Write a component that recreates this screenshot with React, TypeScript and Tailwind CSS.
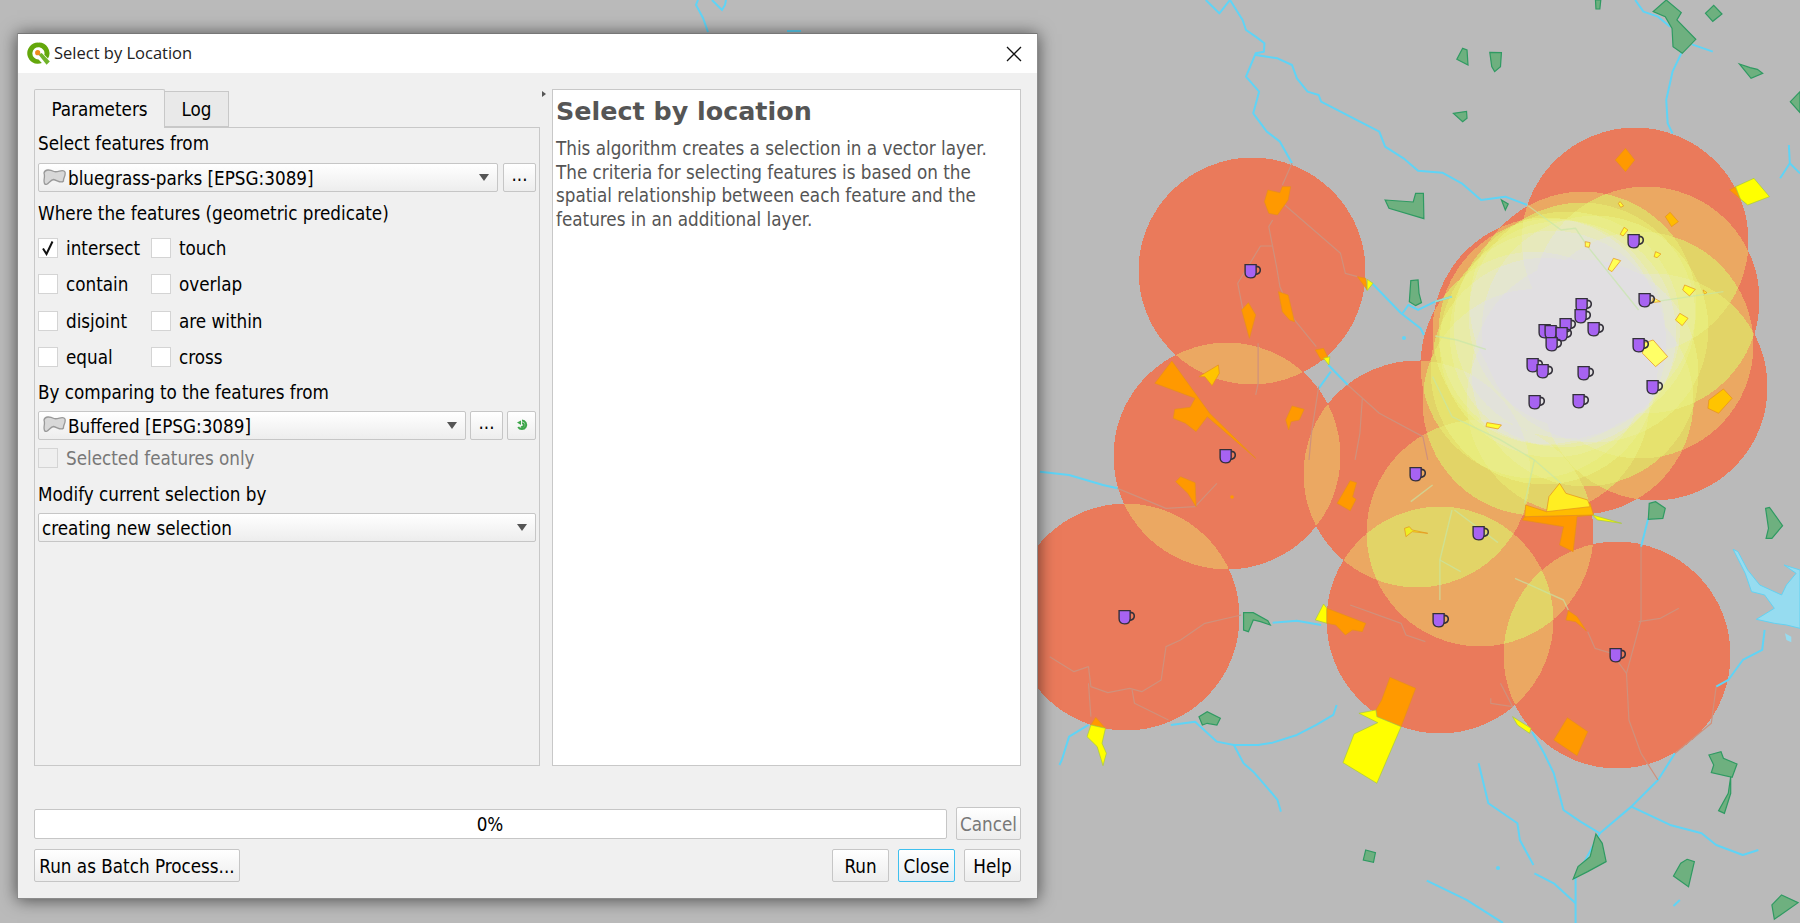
import React from "react";

const BODY = "font-['DejaVu_Sans_Condensed','DejaVu_Sans',sans-serif]";

// cafe points, every one carries a buffer ring
const cups: [number, number][] = [
  [1635, 241], [1646, 300], [1583, 305], [1582, 316], [1567, 325], [1595, 329],
  [1546, 331], [1552, 332], [1563, 334], [1553, 344], [1640, 345], [1534, 365],
  [1544, 371], [1585, 373], [1654, 387], [1536, 402], [1580, 401], [1252, 271],
  [1227, 456], [1417, 474], [1480, 533], [1440, 620], [1617, 655], [1126, 617],
];

const levelColors = [
  "#ea7b5b", "#eca863", "#e3d567", "#e6e36f", "#e8ec7c", "#e9ed88", "#e9ee96",
  "#e8eba8", "#e7e9bc", "#e5e6cf", "#e3e3da", "#e2e0e2",
];

const RING_ALPHA = 0.15;

function buildTables() {
  const hex = (c: string, i: number) => parseInt(c.slice(1 + i * 2, 3 + i * 2), 16) / 255;
  const alphaAt = (k: number) => 1 - Math.pow(1 - RING_ALPHA, k);
  const r: number[] = [], g: number[] = [], b: number[] = [], a: number[] = [];
  for (let i = 0; i < 256; i++) {
    const v = (i + 0.5) / 256;
    let level = 0;
    for (let k = 1; k <= levelColors.length; k++) {
      if (v > (alphaAt(k) + alphaAt(k - 1)) / 2) level = k;
    }
    const c = levelColors[Math.max(level - 1, 0)];
    r.push(hex(c, 0)); g.push(hex(c, 1)); b.push(hex(c, 2));
    a.push(level === 0 ? 0 : 1);
  }
  const s = (t: number[]) => t.map((n) => n.toFixed(3)).join(" ");
  return { r: s(r), g: s(g), b: s(b), a: s(a) };
}

const GREEN = { fill: "#6eb07f", stroke: "#2f9a62" };

// points below are in the 2.06x / 3x crop space of the two map groups
const topParks = [
  "1292,0 1265,35 1290,50 1304,85 1306,140 1325,160 1353,118 1314,60 1323,38",
  "1390,16 1407,42 1388,64 1373,40",
  "1146,0 1157,0 1155,27 1147,27",
  "872,145 881,150 883,195 860,178",
  "928,157 952,158 950,200 938,215 932,200",
  "1443,192 1465,203 1480,208 1491,220 1467,235",
  "1568,275 1548,305 1568,338",
  "853,340 880,334 881,355 872,365",
  "712,600 770,606 775,580 791,580 792,656 720,625",
  "952,600 966,612 960,630",
  "765,842 780,840 782,880 787,908 775,917 762,905",
];

const bottomParks = [
  "1257,130 1270,125 1290,145 1285,175 1255,178",
  "1497,145 1505,142 1532,197 1510,235 1498,235 1503,205",
  "420,458 440,458 470,482 475,495 455,485 440,480 430,515 420,510",
  "328,770 345,755 372,775 365,795 345,790 335,795",
  "1380,885 1405,875 1410,895 1438,912 1428,952 1385,938 1390,915",
  "1425,950 1425,1000 1412,1060 1400,1052 1420,1000",
  "1147,1122 1160,1150 1168,1205 1130,1235 1100,1257 1110,1220 1135,1190",
  "672,1170 692,1178 688,1207 667,1200",
  "1335,1198 1350,1205 1338,1280 1307,1248 1322,1210",
  "1530,1305 1564,1328 1515,1378 1510,1335",
];

const topRivers = [
  "342,0 370,40 392,0 418,60 425,90 445,110 463,130 462,155 445,160 425,230 452,275 440,340 468,395 495,425 520,490",
  "445,165 490,175 520,195 530,235 552,275 575,285 580,305 700,395 712,440 750,475 780,512 830,518 870,550 910,600 960,590 1005,615",
  "1228,0 1245,35 1275,50 1300,80",
  "1345,133 1388,155",
  "1323,160 1305,215 1292,300 1295,370 1305,400",
  "1545,435 1547,490 1527,535",
  "1547,490 1568,520",
  "685,850 745,940 785,985 792,1005",
  "748,940 760,915 780,930 815,905 850,890",
  "595,1095 635,1155",
  "575,1165 600,1115",
];

const bottomRivers = [
  "0,35 60,45 130,75 160,85",
  "480,488 530,482 580,495",
  "100,795 60,830 45,900 40,915",
  "270,795 320,785 365,845 400,855 450,855 480,848 530,825 570,795 605,765 612,735",
  "400,855 420,910 440,935 470,985 490,1020 497,1055",
  "905,910 925,1030 985,1090 990,1140 1018,1215",
  "1015,815 1040,880 1060,940 1080,1050 1115,1085 1155,1120 1220,1040 1275,960 1310,880",
  "1220,1040 1300,1095 1365,1120 1395,1155 1450,1185 1482,1170",
  "1255,175 1240,260",
  "1495,510 1490,570 1450,600 1420,660 1395,680",
  "1155,1120 1105,1255 1105,1389",
  "1020,1240 1060,1270 1105,1330",
  "798,1262 880,1320 955,1389",
  "1320,1320 1307,1338",
];

const topFaint = [
  "520,490 500,555",
  "505,615 620,760 630,820 655,830",
  "480,660 472,680 488,800 495,860 525,960 570,1040",
  "480,738 455,738 408,850 420,940",
  "450,1030 450,1150 445,1185",
  "575,1160 560,1300 555,1380",
  "665,1195 660,1300 650,1380",
  "635,1155 700,1240 790,1310 800,1380",
];

const bottomFaint = [
  "160,85 260,145 320,140 365,70",
  "20,590 70,635 100,620 105,680 140,698 185,685 210,695 250,660 260,560 290,540 340,490 415,465",
  "100,670 105,770",
  "190,690 195,730 265,780",
  "640,435 745,490 755,525 795,545",
  "1240,260 1240,480 1210,640 1215,780 1240,880 1275,960",
  "1235,485 1280,475 1318,445",
  "1130,515 1145,565 1180,580 1210,640",
  "950,670 975,740 930,730 930,715",
  "1395,680 1385,790 1310,880",
];

const topPale = [
  "1005,615 1075,690 1105,685 1130,740 1235,930",
  "1270,905 1410,875",
  "815,1008 860,1020 920,1048",
  "810,1130 850,1250 950,1320 1020,1380",
  "850,890 815,905",
];

const bottomPale = [
  "980,355 1080,420 1090,450",
  "1020,0 1000,130",
  "850,150 825,300 825,420",
  "855,150 945,248",
  "825,300 868,335",
  "810,75 765,125",
  "1020,0 1075,70",
];

const topFeatures: [string, string][] = [
  ["500,560 517,560 512,600 490,645 472,640 463,605 470,570 495,578", "#ff9900"],
  ["430,908 445,945 432,1015 416,930", "#ff9900"],
  ["492,875 512,885 525,965 515,960 500,935", "#ff9900"],
  ["568,1050 585,1045 595,1075 580,1080", "#ff9900"],
  ["655,830 672,835 675,870", "#ff9900"],
  ["675,838 687,850 675,872", "#ffff00"],
  ["585,1075 598,1070 596,1095", "#ffff00"],
  ["1208,445 1227,480 1208,515 1187,480", "#ff9900"],
  ["1290,650 1300,637 1317,665 1303,680", "#ffbb00"],
  ["1423,570 1435,560 1445,597", "#ff9900"],
  ["1435,560 1473,535 1505,590 1460,615 1445,597", "#ffff00"],
  ["237,1150 272,1083 350,1240 445,1375 345,1250 322,1295 300,1270 275,1255 278,1228 310,1222 320,1195", "#ff9900"],
  ["328,1130 368,1095 370,1120 355,1157 340,1130", "#ffc400"],
  ["520,1218 545,1228 535,1260 518,1265 513,1290 507,1260", "#ff9900"],
  ["1380,1200 1410,1167 1428,1195 1400,1240 1378,1225", "#ffc400"],
  ["1197,605 1204,618 1198,622 1193,610", "#ffff33"],
  ["1205,682 1213,690 1203,708 1197,703", "#ffff33"],
  ["1270,755 1281,762 1273,773 1267,770", "#ffff33"],
  ["1183,775 1198,782 1180,815 1172,808", "#ffff55"],
  ["1330,855 1352,868 1340,888 1326,870", "#ffff33"],
  ["1320,940 1337,955 1325,977 1311,960", "#ffff33"],
  ["1368,870 1376,878 1371,882", "#ffff33"],
  ["1245,1030 1265,1020 1295,1070 1270,1100 1243,1060", "#ffff66"],
  ["1125,725 1135,728 1133,742 1125,740", "#ffff55"],
  ["922,1268 952,1275 945,1287 920,1280", "#ffff33"],
  ["1265,893 1280,905 1262,908", "#ffff66"],
];

const bottomFeatures: [string, string][] = [
  ["280,65 290,50 320,68 322,140 305,100", "#ff9900"],
  ["640,62 653,68 645,110 652,118 640,152 613,130", "#ff9900"],
  ["995,180 1000,170 1140,165 1108,170 1100,275 1072,255 1080,200", "#ff9900"],
  ["1002,135 1045,155 1135,130 1142,165 1000,170", "#ffbb00"],
  ["1072,70 1085,100 1130,120 1135,140 1045,155 1050,110", "#ffee22"],
  ["1140,165 1200,190 1150,180", "#ffff00"],
  ["752,205 762,200 768,210 800,220 768,215 755,230", "#eeee22"],
  ["1090,452 1108,470 1127,512 1105,485 1085,480", "#ff9900"],
  ["585,432 592,445 592,490 568,480", "#ffff00"],
  ["592,445 672,490 665,515 645,510 630,525 610,495 592,490", "#ff9900"],
  ["722,652 775,685 745,800 695,770 693,750 705,720", "#ff9900"],
  ["693,750 695,770 745,800 695,970 625,908 648,822 697,788 658,760", "#ffff00"],
  ["1088,773 1130,815 1108,887 1060,840", "#ff9900"],
  ["115,772 135,805 105,795", "#ff9900"],
  ["105,795 135,805 128,850 137,880 130,917 118,860 97,830", "#ffff00"],
  ["975,770 1013,805 1010,820 985,795", "#ffff00"],
];

function Lines({ items, color, width, opacity = 1 }: { items: string[]; color: string; width: number; opacity?: number }) {
  return (
    <>
      {items.map((p) => (
        <polyline key={p} points={p} fill="none" stroke={color} strokeOpacity={opacity} strokeWidth={width} strokeLinejoin="round" vectorEffect="non-scaling-stroke" />
      ))}
    </>
  );
}

function MapLayers({ parks, rivers, faint, pale, features }: { parks: string[]; rivers: string[]; faint: string[]; pale: string[]; features: [string, string][] }) {
  return (
    <>
      <Lines items={rivers} color="#5fd4f6" width={2} />
      <Lines items={faint} color="#cf917c" width={1.2} />
      <Lines items={pale} color="#c4e6a8" width={1.4} opacity={0.65} />
      {parks.map((p) => (
        <polygon key={p} points={p} fill={GREEN.fill} stroke={GREEN.stroke} strokeWidth={1.2} vectorEffect="non-scaling-stroke" />
      ))}
      {features.map(([p, c]) => (
        <polygon key={p} points={p} fill={c} stroke={c === "#ffff00" ? "#a8c83c" : "#e58f1c"} strokeWidth={0.7} vectorEffect="non-scaling-stroke" />
      ))}
    </>
  );
}

function MapCanvas() {
  const t = buildTables();
  return (
    <svg className="absolute inset-0" width={1800} height={923} viewBox="0 0 1800 923">
      <defs>
        <filter id="rings" filterUnits="userSpaceOnUse" x="0" y="0" width="1800" height="923" colorInterpolationFilters="sRGB">
          <feColorMatrix type="matrix" values="0 0 0 1 0 0 0 0 1 0 0 0 0 1 0 0 0 0 1 0" />
          <feComponentTransfer>
            <feFuncR type="discrete" tableValues={t.r} />
            <feFuncG type="discrete" tableValues={t.g} />
            <feFuncB type="discrete" tableValues={t.b} />
            <feFuncA type="discrete" tableValues={t.a} />
          </feComponentTransfer>
        </filter>
      </defs>

      <g filter="url(#rings)">
        {cups.map(([x, y]) => (
          <circle key={`${x}-${y}`} cx={x} cy={y} r={113.5} fill="#fff" fillOpacity={RING_ALPHA} />
        ))}
      </g>

      <g fill="none" stroke="#5fd4f6" strokeWidth={2}>
        <polyline points="698,0 696,5 703,18 708,32" />
        <polyline points="712,0 720,8 722,10 725,5 726,0" />
        <polyline points="787,31 801,31" />
      </g>

      <g transform="translate(1040,0) scale(0.4847,0.3333)">
        <MapLayers parks={topParks} rivers={topRivers} faint={topFaint} pale={topPale} features={topFeatures} />
      </g>
      <g transform="translate(1040,460) scale(0.4847,0.3333)">
        <polygon points="1430,268 1440,275 1460,330 1485,375 1530,405 1540,375 1560,340 1535,315 1568,330 1568,505 1540,495 1515,490 1478,478 1515,445 1495,405 1468,395 1455,340" fill="#96dcf0" stroke="#63d2f2" strokeWidth={1} vectorEffect="non-scaling-stroke" />
        <polygon points="1537,520 1550,530 1550,547 1540,540" fill="#96dcf0" />
        <MapLayers parks={bottomParks} rivers={bottomRivers} faint={bottomFaint} pale={bottomPale} features={bottomFeatures} />
      </g>
      <circle cx={1232} cy={497} r={1.8} fill="#ff9900" />
      <circle cx={1404} cy={338} r={2} fill="#5fd4f6" />
      <circle cx={1498} cy={868} r={2} fill="#5fd4f6" />

      {cups.map(([x, y]) => (
        <g key={`c${x}-${y}`} transform={`translate(${x},${y}) scale(1.15)`}>
          <path d="M3,-4 Q7.2,-4.2 7.2,-0.8 Q7.2,2.8 2.5,3" fill="none" stroke="#33303a" strokeWidth={1.4} />
          <path d="M-6,-5.5 H3.6 V1.500 Q3.4,6 -1.2,6 Q-6,6 -6,1.500 Z" fill="#a763f2" stroke="#33303a" strokeWidth={1.2} />
        </g>
      ))}
    </svg>
  );
}

function QgisLogo() {
  return (
    <svg width={26} height={26} viewBox="0 0 24 24" className="shrink-0">
      <path d="M11 1.500a9.800 9.800 0 1 0 3.600 18.900l-3-3.400a5.600 5.600 0 1 1 5.300-4.200l3.400 3.400A9.800 9.800 0 0 0 11 1.500Z" fill="#64a70b" />
      <path d="M11.500 12.500l3-1.500 7.500 8-3 3Z" fill="#71b32a" />
      <circle cx={10.8} cy={10.8} r={2.4} fill="#ee8a1c" />
    </svg>
  );
}

function LayerIcon() {
  return (
    <svg width={24} height={20} viewBox="0 0 24 20" className="shrink-0">
      <path d="M2 5C3 1 8 1.500 12 3.500C16 5 21 0 23 4C24 8 21 10 21.500 13C19 16 15 12 11.500 11.500C8 11.500 5 19 2.500 15.500C1 12 3.500 9 2 5Z" fill="#d8d8d8" stroke="#999" strokeWidth={1.3} />
    </svg>
  );
}

function ComboArrow() {
  return <span className="h-0 w-0 border-x-[5.5px] border-t-[7px] border-x-transparent border-t-[#555]" />;
}

function Combo({ label, icon, className }: { label: string; icon?: boolean; className: string }) {
  return (
    <div className={`flex h-[29px] items-center justify-between rounded-[2px] border border-[#c6c6c6] bg-linear-to-b from-white to-[#ededed] pl-[3px] pr-[8px] ${className}`}>
      <span className="flex items-center gap-0.5 text-black">
        {icon && <LayerIcon />}
        <span className="pt-[3px]">{label}</span>
      </span>
      <ComboArrow />
    </div>
  );
}

function QtButton({ children, className = "" }: { children: React.ReactNode; className?: string }) {
  return (
    <div className={`flex items-center justify-center rounded-[2px] border border-[#c6c6c6] bg-linear-to-b from-white to-[#ededed] ${className}`}>
      {children}
    </div>
  );
}

function Check({ label, checked, disabled, className = "" }: { label: string; checked?: boolean; disabled?: boolean; className?: string }) {
  return (
    <div className={`flex h-[20px] items-center gap-[8px] ${className}`}>
      <span className={`flex h-[20px] w-[20px] shrink-0 items-center justify-center border ${disabled ? "border-[#d4d4d4] bg-[#efefef]" : "border-[#d4d4d4] bg-white"}`}>
        {checked && (
          <svg width={14} height={16} viewBox="0 0 14 16">
            <path d="M2 8.500L5.500 14L11.500 1.500" fill="none" stroke="#111" strokeWidth={2} />
          </svg>
        )}
      </span>
      <span className={`pt-[2px] ${disabled ? "text-[#787878]" : "text-black"}`}>{label}</span>
    </div>
  );
}

const predicates = [
  ["intersect", "touch"],
  ["contain", "overlap"],
  ["disjoint", "are within"],
  ["equal", "cross"],
];

function ParametersPanel() {
  return (
    <div className="flex w-[506px] shrink-0 flex-col">
      <div className="flex h-[38px] items-end">
        <div className="relative z-10 -mb-px flex h-[39px] w-[131px] items-center justify-center rounded-t-[2px] border border-b-0 border-[#c8c8c8] bg-[#f0f0f0] pt-[2px] text-black">Parameters</div>
        <div className="flex h-[36px] w-[64px] items-center justify-center border border-l-0 border-[#c8c8c8] bg-[#e9e9e9] pt-[3px] text-black">Log</div>
      </div>
      <div className="flex flex-1 flex-col border border-[#c8c8c8] pl-[3px] pr-[3px] text-black">
        <p className="mt-[5px] h-[22px] leading-[22px]">Select features from</p>
        <div className="mt-[8px] flex gap-[5px]">
          <Combo icon label="bluegrass-parks [EPSG:3089]" className="flex-1" />
          <QtButton className="h-[29px] w-[33px] pb-1 text-black">...</QtButton>
        </div>
        <p className="mt-[11px] h-[22px] leading-[22px]">Where the features (geometric predicate)</p>
        <div className="mt-[13px] grid grid-cols-[113px_1fr] gap-y-[16.300px]">
          {predicates.flat().map((name) => (
            <Check key={name} label={name} checked={name === "intersect"} />
          ))}
        </div>
        <p className="mt-[14px] h-[22px] pt-[1px] leading-[22px]">By comparing to the features from</p>
        <div className="mt-[8px] flex gap-[4px]">
          <Combo icon label="Buffered [EPSG:3089]" className="flex-1" />
          <QtButton className="h-[29px] w-[33px] pb-1 text-black">...</QtButton>
          <QtButton className="h-[29px] w-[29px]">
            <svg width={12} height={12} viewBox="0 0 12 12">
              <path d="M6 1.500A4.300 4.300 0 1 1 2.200 8M6 4.300A1.800 1.800 0 1 1 5 7.500" fill="none" stroke="#3da64a" strokeWidth={2} />
              <path d="M1 3.500L5 1.500V6Z" fill="#3da64a" />
            </svg>
          </QtButton>
        </div>
        <Check disabled label="Selected features only" className="mt-[8px]" />
        <p className="mt-[14px] h-[22px] pt-[2px] leading-[22px]">Modify current selection by</p>
        <Combo label="creating new selection" className="mt-[9px]" />
      </div>
    </div>
  );
}

function HelpPanel() {
  return (
    <div className="ml-[12px] flex-1 border border-[#c8c8c8] bg-white pl-[3px] pt-[3px] text-[#555]">
      <h1 className="h-[36px] font-['DejaVu_Sans',sans-serif] text-[25.4px] leading-[36px] font-bold">Select by location</h1>
      <p className="mt-[8px] leading-[23.500px]">
        This algorithm creates a selection in a vector layer.
        <br />
        The criteria for selecting features is based on the
        <br />
        spatial relationship between each feature and the
        <br />
        features in an additional layer.
      </p>
    </div>
  );
}

export default function App() {
  return (
    <div className={`relative h-[923px] w-[1800px] overflow-hidden bg-[#bababa] pl-[17px] pt-[33px] ${BODY} text-[18.7px]`}>
      <MapCanvas />
      <div className="relative flex h-[866px] w-[1021px] flex-col border border-t-0 border-[#8c8c8c] bg-[#f0f0f0] shadow-[0_1px_16px_rgba(0,0,0,0.6)]">
        <div className="flex h-[40px] shrink-0 items-center justify-between border-t border-[#777] bg-white pl-[8px] pr-[15px]">
          <div className="flex items-center gap-[2px] font-['Open_Sans',sans-serif] text-[16.5px] text-[#222]">
            <QgisLogo />
            Select by Location
          </div>
          <svg width={16} height={16} viewBox="0 0 16 16">
            <path d="M1 1L15 15M15 1L1 15" stroke="#111" strokeWidth={1.3} />
          </svg>
        </div>

        <div className="flex flex-1 flex-col px-[16px] pb-[16px] pt-[16px]">
          <div className="relative flex h-[677px] shrink-0">
            <ParametersPanel />
            <span className="absolute left-[508px] top-[2px] h-0 w-0 border-y-[3.500px] border-l-[4px] border-y-transparent border-l-[#555]" />
            <HelpPanel />
          </div>

          <div className="mt-[41px] flex items-center">
            <div className="flex h-[30px] w-[913px] items-center justify-center rounded-[2px] border border-[#c6c6c6] bg-white pr-[1px] pt-[3px] text-black">0%</div>
            <QtButton className="ml-[9px] h-[33px] flex-1 pt-[3px] text-[#787878]">Cancel</QtButton>
          </div>

          <div className="mt-[9px] flex h-[33px] text-black">
            <QtButton className="w-[206px] pt-[4px]">Run as Batch Process...</QtButton>
            <div className="ml-auto flex gap-[9px]">
              <QtButton className="w-[57px] pt-[4px]">Run</QtButton>
              <QtButton className="w-[57px] !border-[#3fc0ee] !to-[#e4ecf2] pt-[4px]">Close</QtButton>
              <QtButton className="w-[57px] pt-[4px]">Help</QtButton>
            </div>
          </div>
        </div>
      </div>
    </div>
  );
}
